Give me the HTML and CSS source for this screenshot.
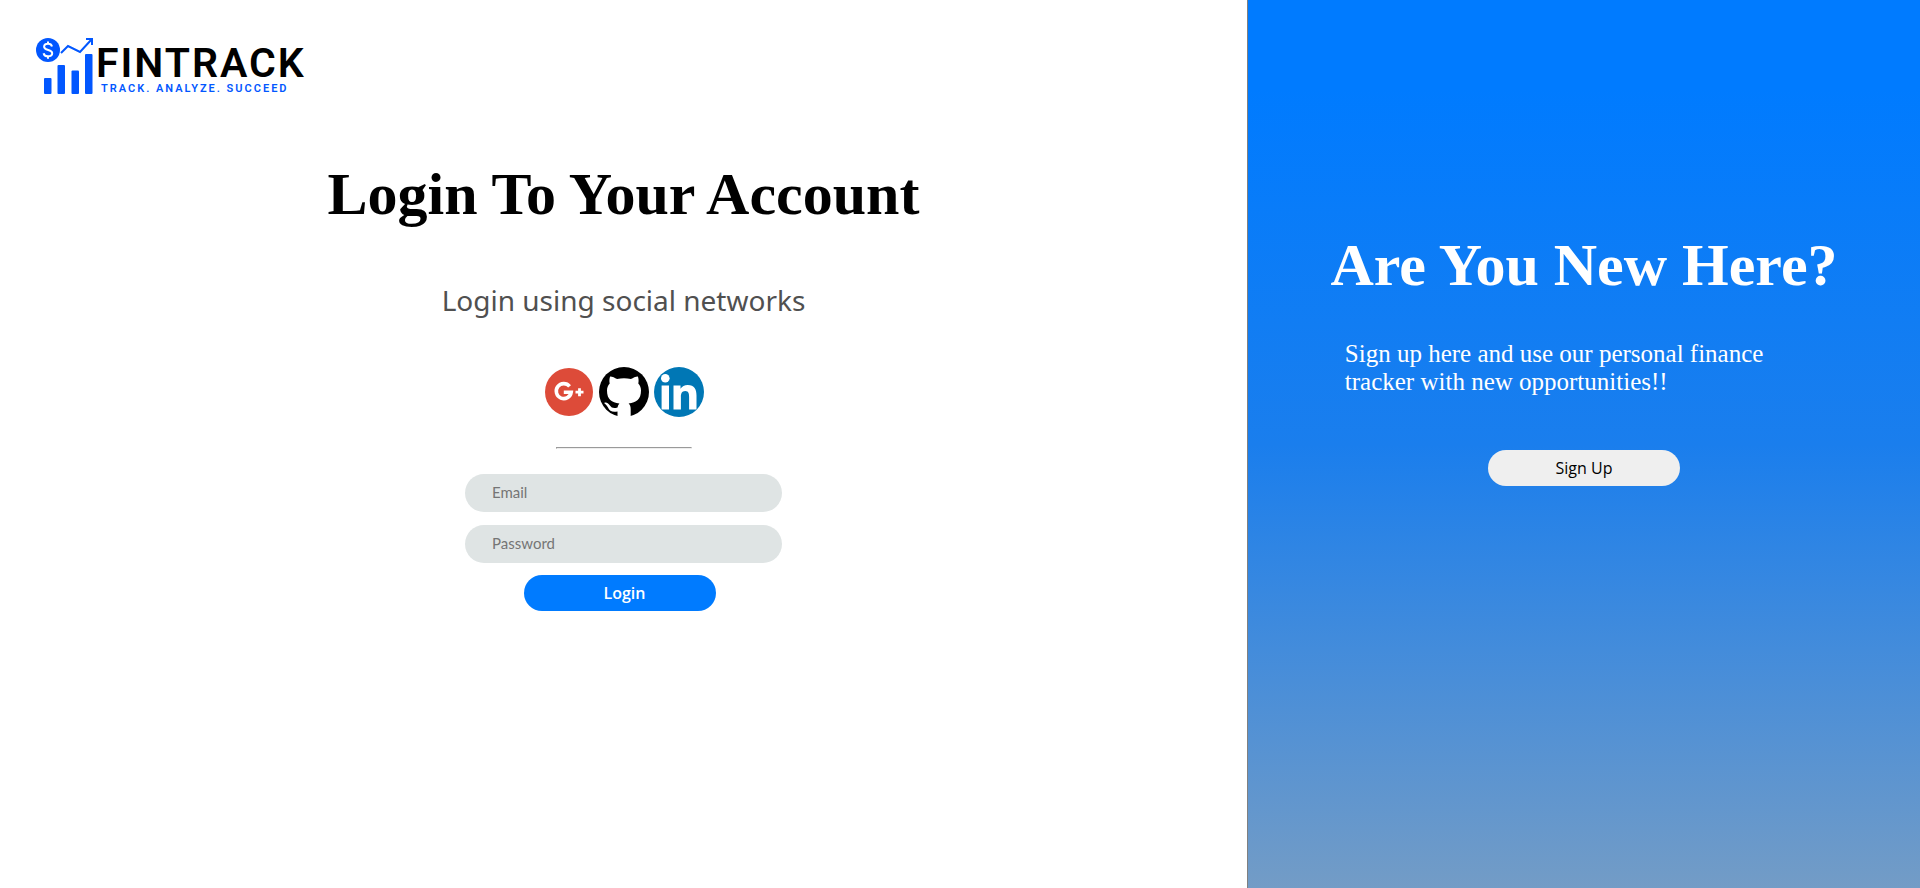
FILE: index.html
```html
<!DOCTYPE html>
<html lang="en">
<head>
<meta charset="utf-8">
<title>FinTrack – Login</title>
<link rel="stylesheet" href="styles.css">
</head>
<body>
<div class="page">
  <main class="login">
    <header class="brand">
      <svg class="brand-mark" viewBox="0 0 60 58" width="60" height="58" aria-hidden="true">
        <circle cx="12" cy="13" r="12" fill="#0257ff"/>
        <path d="M16 9.500c-.5-2-2-2.700-4-2.700-2.300 0-3.900 1.200-3.900 3 0 4.300 8.100 2.200 8.100 6.400 0 1.900-1.700 3.100-4.200 3.100-2.400 0-4-1-4.400-3.100M12 4.500v2.500M12 19v2.700" fill="none" stroke="#fff" stroke-width="2"/>
        <path d="M25 16l7-7 12 6L55.500 2.500M50 2h6v6" fill="none" stroke="#0257ff" stroke-width="2"/>
        <g fill="#0257ff">
          <rect x="8" y="41" width="7.500" height="16" rx="1"/>
          <rect x="21.500" y="28" width="7.500" height="29" rx="1"/>
          <rect x="35.500" y="33.500" width="7.500" height="23.500" rx="1"/>
          <rect x="49" y="17" width="7.500" height="40" rx="1"/>
        </g>
      </svg>
      <div class="brand-text">
        <span class="brand-name">FINTRACK</span>
        <span class="brand-tag">TRACK. ANALYZE. SUCCEED</span>
      </div>
    </header>
    <h1 class="title">Login To Your Account</h1>
    <p class="subtitle">Login using social networks</p>
    <nav class="socials" aria-label="Social login">
      <a href="#" aria-label="Google Plus">
        <svg viewBox="0 0 50 50" width="50" height="50">
          <circle cx="25" cy="25" r="24" fill="#dd4b39"/>
          <path d="M25.600 19.400A7.500 7.500 0 1 0 27.200 25.200H19.800" fill="none" stroke="#fff" stroke-width="3.600"/>
          <path d="M35.500 21.200v8M31.500 25.200h8" stroke="#fff" stroke-width="2.800"/>
        </svg>
      </a>
      <a href="#" aria-label="GitHub">
        <svg viewBox="0 0 50 50" width="50" height="50">
          <circle cx="25" cy="25" r="25" fill="#000"/>
          <path d="M18.500 50v-5.500c-5.200 1-7.800-.2-9.500-4-.8-1.700-1.800-2.800-3.200-3.800-.9-.8-.3-1.400.7-1.300 2 .1 3.400 1.500 4.400 3.100 1.700 2.600 4.200 3 7.600 1.900.3-1.600.9-2.900 1.900-3.900C12.700 35.500 8 32.500 8 23.500c0-3 .9-5.200 2.700-7.100-.5-2.200-.4-4.600.4-7 2.500 0 4.700 1.200 7 2.700 4.500-1.200 9.300-1.200 13.800 0 2.300-1.500 4.500-2.700 7-2.700.8 2.400.9 4.800.4 7 1.800 1.900 2.700 4.100 2.700 7.100 0 9-4.700 12-12.400 13 1.400 1.300 2.100 3 2.100 5.500v8z" fill="#fff"/>
        </svg>
      </a>
      <a href="#" aria-label="LinkedIn">
        <svg viewBox="0 0 50 50" width="50" height="50">
          <circle cx="25" cy="25" r="25" fill="#0077b5"/>
          <circle cx="11.300" cy="11.300" r="4.300" fill="#fff"/>
          <path d="M7.600 18.500h7.400v24H7.600zM19.500 18.500h7v3.300c1.500-2.500 4-3.900 7.200-3.900 6.800 0 8.800 4.400 8.800 10.600v14h-7.400V30c0-3-.3-6-3.900-6-3.500 0-4.300 2.800-4.300 5.800v12.700h-7.400z" fill="#fff"/>
        </svg>
      </a>
    </nav>
    <hr class="divider">
    <form class="form">
      <input class="field" type="email" placeholder="Email" aria-label="Email">
      <input class="field" type="password" placeholder="Password" aria-label="Password">
      <button class="btn btn-login" type="submit">Login</button>
    </form>
  </main>
  <aside class="signup">
    <h2 class="title">Are You New Here?</h2>
    <p class="pitch">Sign up here and use our personal finance tracker with new opportunities!!</p>
    <button class="btn btn-signup" type="button">Sign Up</button>
  </aside>
</div>
</body>
</html>
```
FILE: styles.css
```css
* { box-sizing: border-box; }
body { margin: 0; background: #fff; font-family: "Liberation Serif", serif; }
.page { display: grid; grid-template-columns: 65% 35%; min-height: 100vh; }
.login { display: flex; flex-direction: column; align-items: center; border-right: 1px solid #808080; }
.brand { align-self: flex-start; display: flex; padding: 37px 36px 0; }
.brand-text { display: flex; flex-direction: column; font-family: Roboto, sans-serif; }
.brand-name { font-size: 41px; line-height: 40px; font-weight: 600; letter-spacing: 2px; color: #000; padding-top: 6px; }
.brand-tag { font-size: 11px; line-height: 12px; font-weight: 600; letter-spacing: 2px; color: #0257ff; padding-left: 5px; }
.title { margin: 0; font-size: 60px; line-height: 68px; font-weight: 700; text-align: center; }
.login .title { margin-top: 65px; }
.subtitle { margin: 52px 0 0; font-family: "Noto Sans", sans-serif; font-size: 28px; line-height: 40px; color: #505050; }
.socials { display: flex; gap: 5px; margin-top: 47px; }
.socials a, .socials svg { display: block; }
.divider { width: 136px; margin: 30px 0 0; border: 1px solid; border-color: #9a9a9a #eee #eee #9a9a9a; }
.form { display: flex; flex-direction: column; align-items: center; margin-top: 25px; }
.field { width: 317px; height: 38px; margin-bottom: 13px; padding: 0 27px 2px; border: 0; border-radius: 20px; background: #dfe4e4; font-family: Lato, sans-serif; font-size: 15px; color: #333; }
.field::placeholder { color: #757575; }
.btn { width: 192px; height: 36px; border: 0; border-radius: 20px; padding: 0; font-family: "Open Sans", sans-serif; font-size: 16px; }
.btn-login { margin: -1px 8px 0 0; padding-left: 10px; background: #007bff; color: #fff; font-weight: 600; }
.btn-signup { background: #efefef; color: #000; margin-top: 54px; }
.signup { display: flex; flex-direction: column; align-items: center; padding: 231px 24px 0; color: #fff; background: linear-gradient(#007bff 10%, #1a7eed 50%, #739cc6); }
.pitch { width: 85%; margin: 41px 0 0; padding-left: 26px; padding-right: 58px; font-size: 25px; line-height: 28px; }
```
